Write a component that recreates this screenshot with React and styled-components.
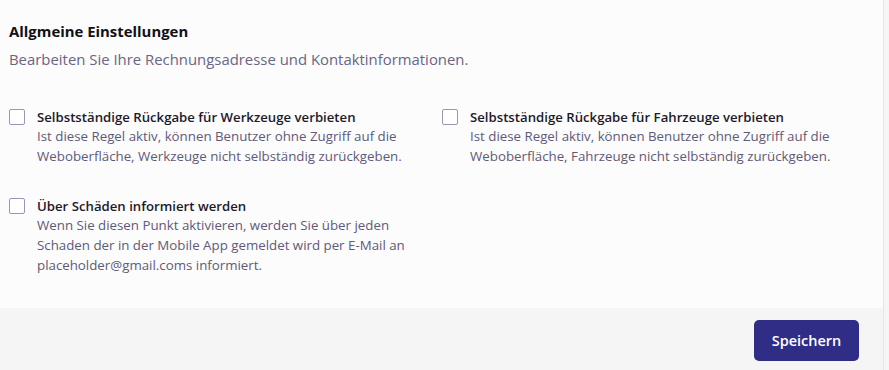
import React from "react";
import styled, { createGlobalStyle } from "styled-components";

const Global = createGlobalStyle`
  html, body { margin: 0; padding: 0; background: #f5f5f6; }
  body { font-family: "Open Sans", "Noto Sans", sans-serif; }
`;

const Card = styled.div`
  width: 884px;
  border-right: 1px solid #e6e6ea;
  box-sizing: border-box;
  background: #fcfcfd;
  display: flex;
  flex-direction: column;
`;

const Body = styled.div`
  padding: 21px 10px 33px 9px;
`;

const Title = styled.h2`
  margin: 0;
  font-size: 14.9px;
  font-weight: 700;
  color: #111016;
  line-height: 20px;
`;

const Subtitle = styled.p`
  margin: 8px 0 0;
  font-size: 14.9px;
  color: #6a6583;
  line-height: 20px;
`;

const Grid = styled.div`
  margin-top: 39px;
  display: grid;
  grid-template-columns: 433px 1fr;
  row-gap: 31px;
`;

const Option = styled.label`
  display: flex;
  gap: 12px;
  align-items: flex-start;
`;

const Box = styled.span`
  flex: none;
  width: 14px;
  height: 14px;
  margin-top: 1px;
  border: 1px solid #9c96b6;
  border-radius: 2px;
  background: #fff;
`;

const Text = styled.div`
  display: flex;
  flex-direction: column;
`;

const Label = styled.span`
  font-size: 13.2px;
  font-weight: 600;
  color: #1d1a2a;
  line-height: 18px;
`;

const Desc = styled.span`
  font-size: 13.3px;
  color: #5f5a77;
  line-height: 20px;
`;

const Footer = styled.div`
  background: #f5f5f6;
  display: flex;
  justify-content: flex-end;
  padding: 12px 24px 10px 0;
  height: 63px;
  box-sizing: border-box;
`;

const Button = styled.button`
  width: 105px;
  height: 41px;
  border: none;
  border-radius: 5px;
  background: #2f2d86;
  color: #fff;
  font-family: inherit;
  font-size: 14.5px;
  font-weight: 600;
  cursor: pointer;
`;

const options = [
  {
    label: "Selbstständige Rückgabe für Werkzeuge verbieten",
    desc: ["Ist diese Regel aktiv, können Benutzer ohne Zugriff auf die", "Weboberfläche, Werkzeuge nicht selbständig zurückgeben."],
  },
  {
    label: "Selbstständige Rückgabe für Fahrzeuge verbieten",
    desc: ["Ist diese Regel aktiv, können Benutzer ohne Zugriff auf die", "Weboberfläche, Fahrzeuge nicht selbständig zurückgeben."],
  },
  {
    label: "Über Schäden informiert werden",
    desc: [
      "Wenn Sie diesen Punkt aktivieren, werden Sie über jeden",
      "Schaden der in der Mobile App gemeldet wird per E-Mail an",
      "placeholder@gmail.coms informiert.",
    ],
  },
];

export default function App() {
  return (
    <>
      <Global />
      <Card>
        <Body>
          <Title>Allgmeine Einstellungen</Title>
          <Subtitle>Bearbeiten Sie Ihre Rechnungsadresse und Kontaktinformationen.</Subtitle>
          <Grid>
            {options.map((o) => (
              <Option key={o.label}>
                <Box />
                <Text>
                  <Label>{o.label}</Label>
                  {o.desc.map((d) => (
                    <Desc key={d}>{d}</Desc>
                  ))}
                </Text>
              </Option>
            ))}
          </Grid>
        </Body>
        <Footer>
          <Button>Speichern</Button>
        </Footer>
      </Card>
    </>
  );
}
